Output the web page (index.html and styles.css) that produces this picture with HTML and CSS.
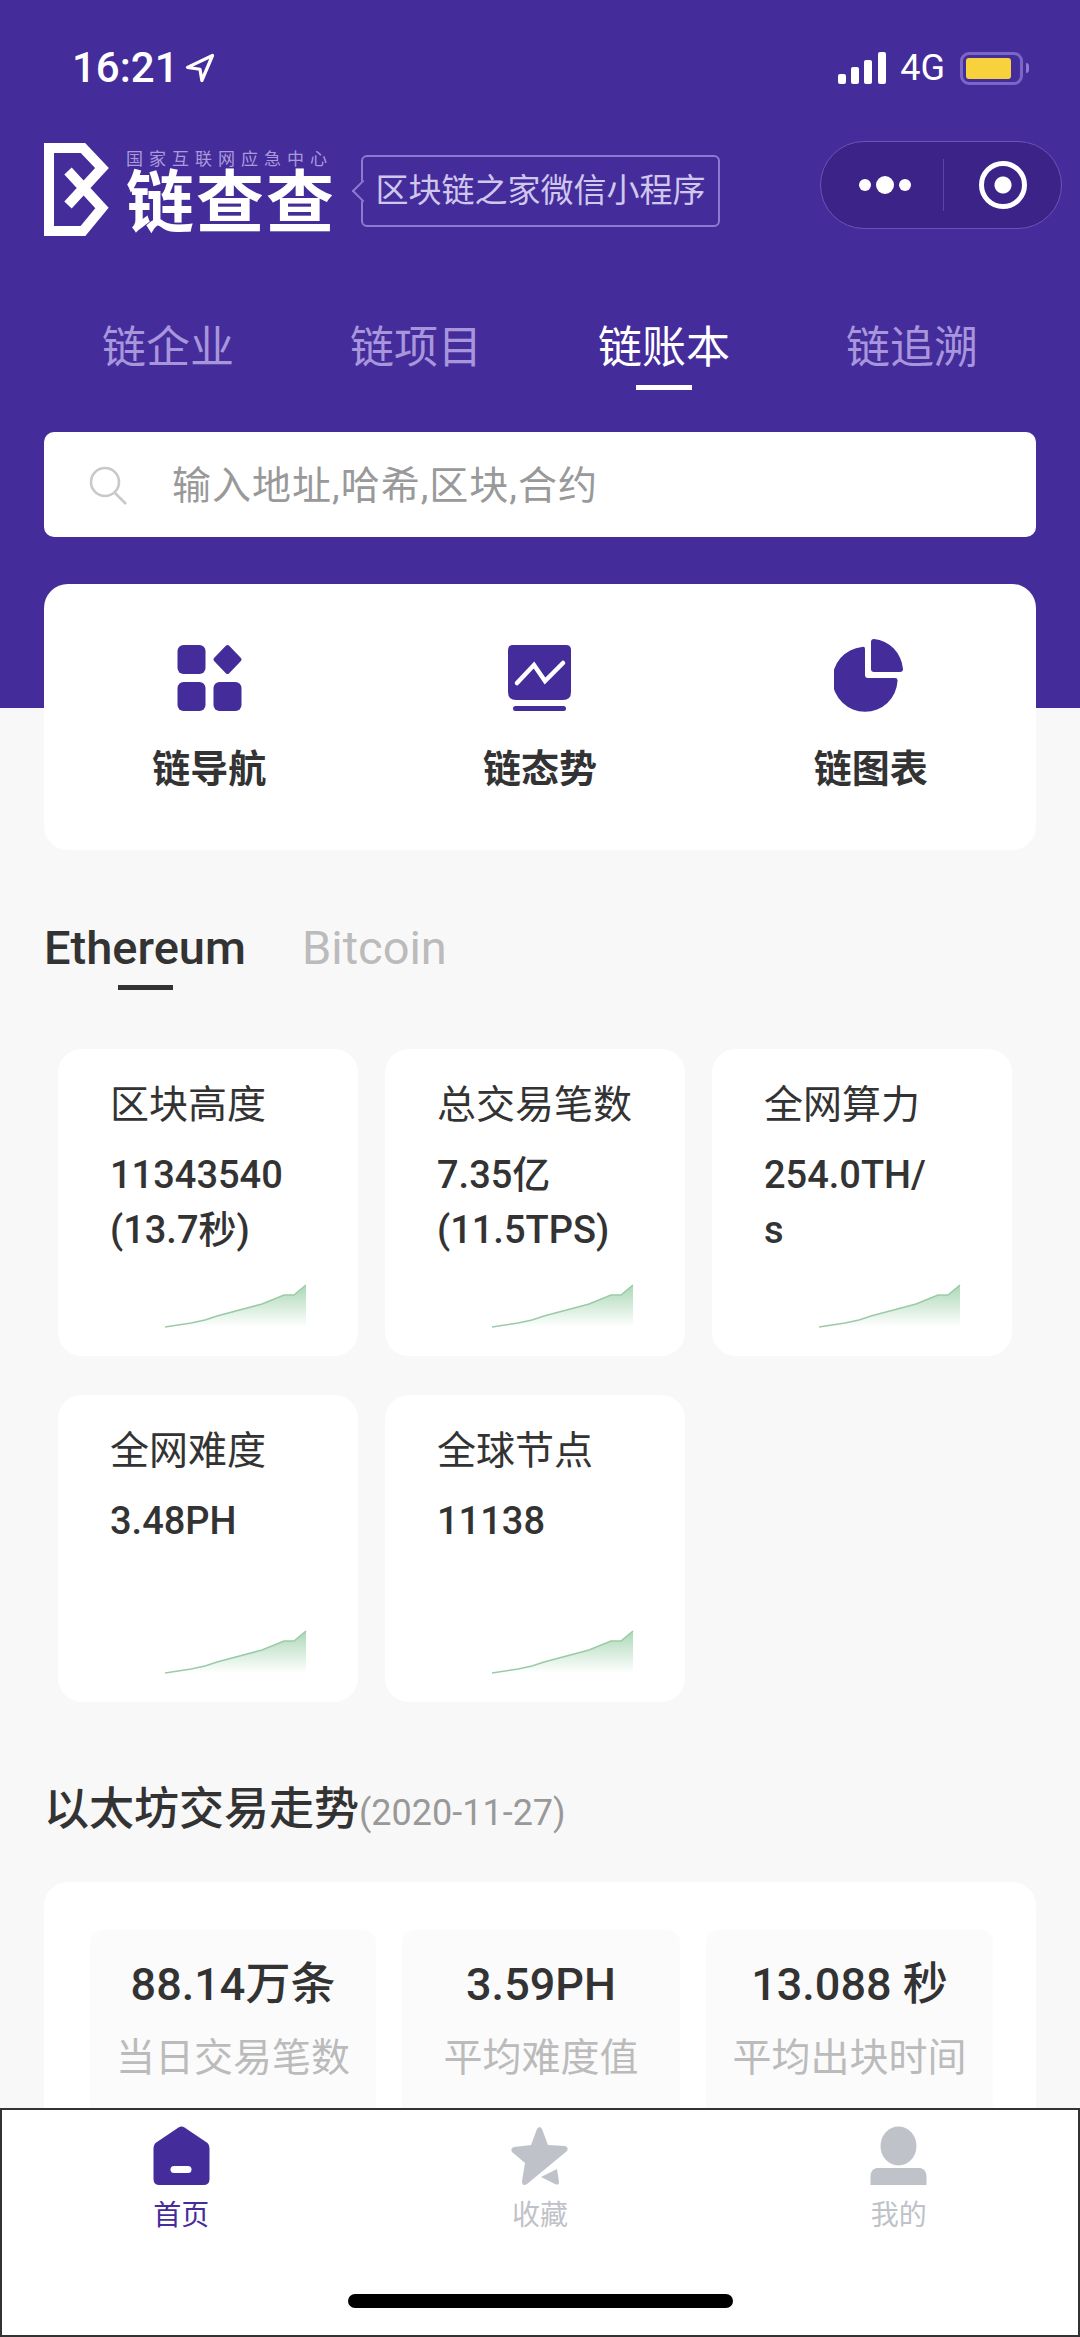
FILE: index.html
```html
<!DOCTYPE html>
<html>
<head>
<meta charset="utf-8"/>
<title>链查查</title>
<link rel="stylesheet" href="styles.css">
</head>
<body>
<svg class="defs" width="0" height="0">
  <defs>
    <linearGradient id="spark-fill" x1="0" y1="0" x2="0" y2="1">
      <stop offset="0" stop-color="#8fcb9e" stop-opacity="0.75"/>
      <stop offset="1" stop-color="#8fcb9e" stop-opacity="0"/>
    </linearGradient>
    <symbol id="spark" viewBox="0 0 142 44">
      <path d="M0 43L26 39 40 36 52 32 97 20 119 11 129 11 141 1V43Z" fill="url(#spark-fill)"/>
      <path d="M0 43L26 39 40 36 52 32 97 20 119 11 129 11 141 1" fill="none" stroke="#9bcba6" stroke-width="1.6"/>
    </symbol>
  </defs>
</svg>

<div class="page">
  <main class="content">
    <header class="hero">
      <div class="status">
        <div class="status-left">
          <span class="clock">16:21</span>
          <svg class="arrow" viewBox="0 0 24 24"><path d="M22 2L2 11.5 12 13 13.5 22Z" fill="none" stroke="#fff" stroke-width="2.6" stroke-linejoin="round"/></svg>
        </div>
        <div class="status-right">
          <svg class="signal" viewBox="0 0 48 32"><rect x="0" y="22" width="8" height="10" rx="2"/><rect x="13" y="15" width="8" height="17" rx="2"/><rect x="26" y="8" width="8" height="24" rx="2"/><rect x="40" y="0" width="8" height="32" rx="2"/></svg>
          <span class="net">4G</span>
          <div class="battery"><div class="battery-level"></div></div>
          <div class="battery-nub"></div>
        </div>
      </div>

      <div class="brand-row">
        <div class="logo">
          <svg class="logo-mark" viewBox="0 0 65 94"><path d="M24 62L58 25 39 5H5V88H39L58 65 24 28" fill="none" stroke="#fff" stroke-width="10"/></svg>
          <div class="logo-text">
            <div class="logo-sub">国家互联网应急中心</div>
            <div class="logo-name">链查查</div>
          </div>
        </div>
        <div class="tag">区块链之家微信小程序</div>
        <div class="capsule">
          <div class="capsule-dots"><i></i><i class="big"></i><i></i></div>
          <div class="capsule-line"></div>
          <div class="capsule-target"><i></i></div>
        </div>
      </div>

      <nav class="tabs">
        <a class="tab">链企业</a>
        <a class="tab">链项目</a>
        <a class="tab active">链账本</a>
        <a class="tab">链追溯</a>
      </nav>

      <div class="search">
        <svg class="search-icon" viewBox="0 0 40 40"><circle cx="17" cy="17" r="14" fill="none" stroke="#c9c9c9" stroke-width="2.6"/><path d="M27 28L38 39" stroke="#c9c9c9" stroke-width="2.6"/></svg>
        <span class="search-hint">输入地址,哈希,区块,合约</span>
      </div>
    </header>

    <section class="quick">
      <div class="quick-item">
        <svg class="quick-icon" viewBox="-2.5 -6 69 73">
          <rect x="0" y="0" width="28" height="29" rx="6"/>
          <path d="M50 2L62 14.500 50 27 38 14.500Z" stroke="#452c9b" stroke-width="4" stroke-linejoin="round"/>
          <rect x="0" y="37" width="28" height="29" rx="6"/>
          <rect x="36" y="37" width="28" height="29" rx="6"/>
        </svg>
        <span>链导航</span>
      </div>
      <div class="quick-item">
        <svg class="quick-icon" viewBox="-3 -6 69 73">
          <path d="M5 0H58Q63 0 63 5V47Q63 55 55 55H8Q0 55 0 47V5Q0 0 5 0Z"/>
          <path d="M9 38L26 20 37 36 55 18" fill="none" stroke="#fff" stroke-width="4.500" stroke-linecap="round"/>
          <rect x="5" y="61" width="53" height="5" rx="2.500"/>
        </svg>
        <span>链态势</span>
      </div>
      <div class="quick-item">
        <svg class="quick-icon pie" viewBox="0 0 69 73">
          <path d="M28 8Q31 7 31 10V36Q31 39 34 39H61Q64 39 63.500 42A32.500 32.500 0 1 1 28 8Z"/>
          <path d="M40 0A32 33 0 0 1 69 30Q69 33 66 33H40Q37 33 37 30V3Q37 0 40 0Z"/>
        </svg>
        <span>链图表</span>
      </div>
    </section>

    <div class="chain-tabs">
      <div class="chain-tab active">Ethereum</div>
      <div class="chain-tab">Bitcoin</div>
    </div>

    <section class="stats">
      <article class="stat">
        <h3>区块高度</h3>
        <p>11343540<br>(13.7秒)</p>
        <svg class="spark"><use href="#spark"/></svg>
      </article>
      <article class="stat">
        <h3>总交易笔数</h3>
        <p>7.35亿<br>(11.5TPS)</p>
        <svg class="spark"><use href="#spark"/></svg>
      </article>
      <article class="stat">
        <h3>全网算力</h3>
        <p>254.0TH/<br>s</p>
        <svg class="spark"><use href="#spark"/></svg>
      </article>
      <article class="stat">
        <h3>全网难度</h3>
        <p>3.48PH</p>
        <svg class="spark"><use href="#spark"/></svg>
      </article>
      <article class="stat">
        <h3>全球节点</h3>
        <p>11138</p>
        <svg class="spark"><use href="#spark"/></svg>
      </article>
    </section>

    <h2 class="trend-title">以太坊交易走势<small>(2020-11-27)</small></h2>

    <section class="trend">
      <div class="trend-cell">
        <strong>88.14万条</strong>
        <span>当日交易笔数</span>
      </div>
      <div class="trend-cell">
        <strong>3.59PH</strong>
        <span>平均难度值</span>
      </div>
      <div class="trend-cell">
        <strong>13.088 秒</strong>
        <span>平均出块时间</span>
      </div>
    </section>
  </main>

  <footer class="tabbar">
    <div class="tabbar-items">
      <div class="tabbar-item on">
        <svg viewBox="0 0 56 60"><path d="M25 1.500Q28 -0.500 31 1.500L54 17Q56 19 56 22V53Q56 59 50 59H6Q0 59 0 53V22Q0 19 2 17Z" fill="#452c9b"/><rect x="17" y="40" width="21" height="7" rx="3.500" fill="#fff"/></svg>
        <span>首页</span>
      </div>
      <div class="tabbar-item">
        <svg viewBox="0 0 57 60"><path d="M26 3Q28.500 -1 31 3L37 19 54 20Q58 21 56 25L16 58Q11 61 11 55L14 37 1 26Q-1 22 3 21L20 19Z" fill="#c0c2c9"/><path d="M46 43L48 56Q48 60 44 58L30 51Z" fill="#c0c2c9"/></svg>
        <span>收藏</span>
      </div>
      <div class="tabbar-item">
        <svg viewBox="0 0 56 60"><ellipse cx="28" cy="20" rx="18" ry="19.500" fill="#c0c2c9"/><path d="M6 42H50Q56 44 56 50V59H0V50Q0 44 6 42Z" fill="#c0c2c9"/></svg>
        <span>我的</span>
      </div>
    </div>
    <div class="home-bar"></div>
  </footer>
</div>
</body>
</html>
```

FILE: styles.css
```css
* {
  box-sizing: border-box;
}

body {
  margin: 0;
  background: #f8f8f8;
  color: #333;
  font-family: Roboto, "Noto Sans CJK SC", sans-serif;
}

.defs {
  display: block;
}

.page {
  display: flex;
  flex-direction: column;
  height: 2337px;
  overflow: hidden;
}

.content {
  height: 2108px;
  overflow: hidden;
}

/* purple header */
.hero {
  height: 708px;
  padding: 46px 44px 0;
  background: #452c9b;
  color: #fff;
}

.status {
  display: flex;
  justify-content: space-between;
  align-items: center;
  height: 44px;
  padding: 0 7px 0 28px;
}

.status-left,
.status-right {
  display: flex;
  align-items: center;
}

.clock {
  font-size: 42px;
  font-weight: 500;
  line-height: 44px;
}

.arrow {
  width: 30px;
  height: 32px;
  margin-left: 6px;
}

.signal {
  width: 48px;
  height: 32px;
  fill: #fff;
}

.net {
  margin-left: 14px;
  font-size: 36px;
  line-height: 44px;
}

.battery {
  width: 63px;
  height: 33px;
  margin-left: 15px;
  padding: 3px;
  border: 3px solid #7a66c4;
  border-radius: 9px;
}

.battery-level {
  width: 45px;
  height: 21px;
  border-radius: 3px;
  background: #f8d23c;
}

.battery-nub {
  width: 3px;
  height: 10px;
  margin-left: 3px;
  border-radius: 0 3px 3px 0;
  background: #8d7bd2;
}

.brand-row {
  display: flex;
  align-items: center;
  height: 96px;
  margin-top: 51px;
}

.logo {
  display: flex;
  align-items: flex-end;
  height: 94px;
  margin-top: 2px;
}

.logo-mark {
  width: 65px;
  height: 94px;
}

.logo-text {
  margin-left: 17px;
}

.logo-sub {
  color: #a99bdb;
  font-size: 17px;
  line-height: 24px;
  letter-spacing: 6px;
  white-space: nowrap;
}

.logo-name {
  height: 66px;
  color: #fff;
  font-size: 68px;
  font-weight: 700;
  line-height: 66px;
  letter-spacing: 2px;
}

.tag {
  position: relative;
  width: 359px;
  height: 72px;
  margin: 4px 0 0 25px;
  border: 2px solid #8d7bd2;
  border-radius: 6px;
  color: #cfc7ec;
  font-size: 33px;
  line-height: 68px;
  text-align: center;
  white-space: nowrap;
}

/* little point of the speech bubble */
.tag::before {
  content: "";
  position: absolute;
  left: -8px;
  top: 26px;
  width: 14px;
  height: 14px;
  border-left: 2px solid #8d7bd2;
  border-bottom: 2px solid #8d7bd2;
  background: #452c9b;
  transform: rotate(45deg);
}

.capsule {
  display: flex;
  align-items: center;
  width: 242px;
  height: 88px;
  margin: 0 -26px 8px auto;
  border: 1px solid #6a54b8;
  border-radius: 44px;
  background: #3b2388;
}

.capsule-dots {
  display: flex;
  flex: 1;
  justify-content: center;
  align-items: center;
  gap: 5px;
  padding-left: 5px;
}

.capsule-dots i {
  width: 12px;
  height: 12px;
  border-radius: 50%;
  background: #fff;
}

.capsule-dots i.big {
  width: 18px;
  height: 18px;
}

.capsule-line {
  width: 1px;
  height: 52px;
  background: #5a45a8;
}

.capsule-target {
  display: flex;
  flex: 1;
  justify-content: center;
  align-items: center;
}

.capsule-target i {
  width: 48px;
  height: 48px;
  border: 5px solid #fff;
  border-radius: 50%;
  background: radial-gradient(circle, #fff 0 8px, transparent 9px);
}

.tabs {
  display: flex;
  justify-content: space-between;
  margin: 81px 0 0 0;
  padding: 0 58px;
}

.tab {
  position: relative;
  color: #a896dc;
  font-size: 44px;
  line-height: 60px;
  white-space: nowrap;
}

.tab.active {
  color: #fff;
}

.tab.active::after {
  content: "";
  position: absolute;
  left: 38px;
  bottom: -12px;
  width: 56px;
  height: 5px;
  background: #fff;
}

.search {
  display: flex;
  align-items: center;
  height: 105px;
  margin-top: 54px;
  padding-left: 44px;
  border-radius: 10px;
  background: #fff;
  color: #999;
  font-size: 39px;
  letter-spacing: 1px;
}

.search-icon {
  width: 40px;
  height: 40px;
  margin-right: 44px;
}

.search-hint {
  margin-top: -5px;
}

/* three shortcuts that hang over the header edge */
.quick {
  display: grid;
  grid-template-columns: repeat(3, 1fr);
  height: 266px;
  margin: -124px 44px 0;
  border-radius: 24px;
  background: #fff;
}

.quick-item {
  display: flex;
  flex-direction: column;
  align-items: center;
  padding-top: 55px;
  font-size: 38px;
  font-weight: 700;
}

.quick-icon {
  width: 69px;
  height: 73px;
  fill: #452c9b;
}

.quick-icon.pie {
  margin-left: -4px;
}

.quick-item span {
  margin-top: 32px;
  line-height: 50px;
}

.chain-tabs {
  display: flex;
  gap: 56px;
  margin: 68px 44px 0;
}

.chain-tab {
  position: relative;
  color: #bbb;
  font-size: 47px;
  line-height: 60px;
}

.chain-tab.active {
  color: #333;
  font-weight: 500;
}

.chain-tab.active::after {
  content: "";
  position: absolute;
  left: 74px;
  bottom: -12px;
  width: 55px;
  height: 5px;
  background: #333;
}

.stats {
  display: grid;
  grid-template-columns: repeat(3, 300px);
  grid-auto-rows: 307px;
  gap: 39px 27px;
  margin: 71px 58px 0;
}

.stat {
  position: relative;
  padding: 28px 0 0 52px;
  border-radius: 24px;
  background: #fff;
}

.stat h3 {
  margin: 0;
  font-size: 39px;
  font-weight: 400;
  line-height: 56px;
  white-space: nowrap;
}

.stat p {
  margin: 15px 0 0;
  font-size: 38px;
  font-weight: 500;
  line-height: 55px;
}

.spark {
  position: absolute;
  right: 51px;
  bottom: 28px;
  width: 142px;
  height: 44px;
}

.trend-title {
  margin: 78px 44px 0;
  font-size: 45px;
  font-weight: 500;
  line-height: 60px;
}

.trend-title small {
  color: #999;
  font-size: 36px;
  font-weight: 400;
}

.trend {
  display: grid;
  grid-template-columns: 286px 278px 287px;
  gap: 26px;
  height: 400px;
  margin: 39px 44px 0;
  padding: 48px 46px 0;
  border-radius: 24px;
  background: #fff;
}

.trend-cell {
  display: flex;
  flex-direction: column;
  align-items: center;
  padding-top: 25px;
  border-radius: 12px;
  background: #fbfbfb;
  white-space: nowrap;
}

.trend-cell strong {
  font-size: 45px;
  font-weight: 500;
  line-height: 60px;
}

.trend-cell span {
  margin-top: 14px;
  color: #bbb;
  font-size: 39px;
  line-height: 58px;
}

/* bottom bar */
.tabbar {
  display: flex;
  flex: 1;
  flex-direction: column;
  border: 2px solid #333;
  background: #fff;
}

.tabbar-items {
  display: grid;
  grid-template-columns: repeat(3, 1fr);
  padding: 16px 0 0;
}

.tabbar-item {
  display: flex;
  flex-direction: column;
  align-items: center;
  color: #c0c2c9;
  font-size: 28px;
}

.tabbar-item svg {
  width: 57px;
  height: 60px;
}

.tabbar-item span {
  margin-top: 10px;
  line-height: 40px;
}

.tabbar-item.on {
  color: #452c9b;
}

.home-bar {
  width: 385px;
  height: 14px;
  margin: auto auto 27px;
  border-radius: 7px;
  background: #000;
}
```
